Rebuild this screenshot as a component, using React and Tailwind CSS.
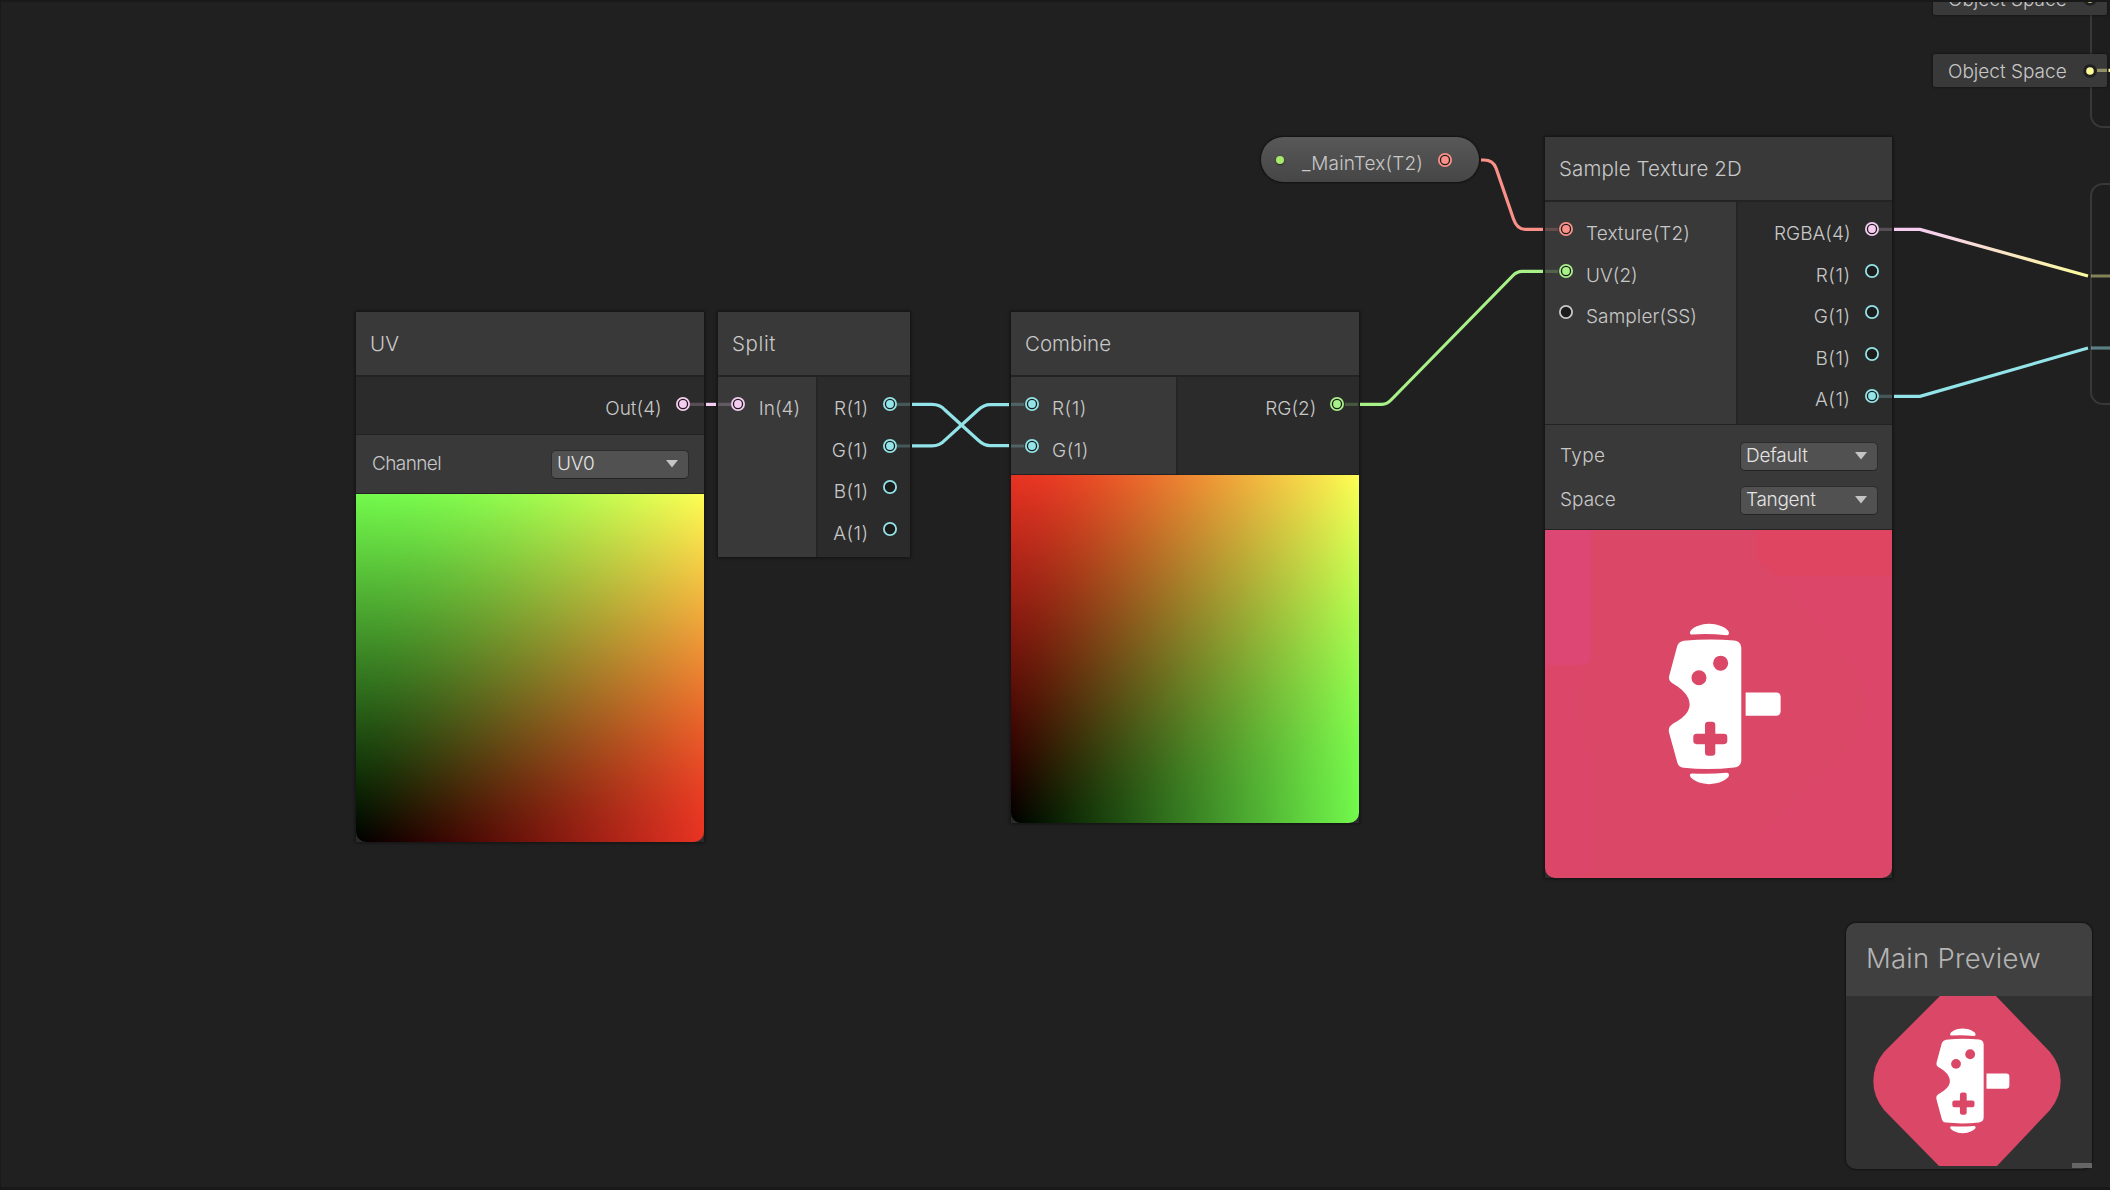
import React from "react";

const COLORS = {
  pink: "#f6cdf1",
  cyan: "#93e4e8",
  green: "#a8f088",
  red: "#fb9089",
  gray: "#c8c8c8",
  yellow: "#fcfc9c",
};

function Port({ color, connected = false, className = "" }) {
  return (
    <svg viewBox="0 0 16 16" className={`size-4 shrink-0 ${className}`}>
      <circle cx="8" cy="8" r="6.1" fill="#1c1c1c" stroke={COLORS[color]} strokeWidth="1.8" />
      {connected && <circle cx="8" cy="8" r="3.9" fill={COLORS[color]} />}
    </svg>
  );
}

function InputPort({ label, color, connected, tracking = "" }) {
  return (
    <div className="flex h-[41.6px] items-center gap-[12.5px]">
      <Port color={color} connected={connected} />
      <span className={`relative top-[4.7px] leading-6 whitespace-nowrap ${tracking}`}>{label}</span>
    </div>
  );
}

function OutputPort({ label, color, connected, tracking = "" }) {
  return (
    <div className="flex h-[41.6px] items-center justify-end gap-[13px]">
      <span className={`relative top-[4.7px] leading-6 whitespace-nowrap ${tracking}`}>{label}</span>
      <Port color={color} connected={connected} />
    </div>
  );
}

function Node({ title, tracking = "", place, children }) {
  return (
    <section className={`absolute flex flex-col bg-[#2b2b2b] shadow-[0_0_3px_1px_rgba(0,0,0,0.45)] ${place}`}>
      <header className="flex h-[63px] shrink-0 items-center bg-[#393939] pl-[14px] text-[20.5px]">
        <span className={`leading-6 ${tracking}`}>{title}</span>
      </header>
      <div className="h-[2px] shrink-0 bg-[#232323]" />
      {children}
    </section>
  );
}

function Dropdown({ value, tracking }) {
  return (
    <div className="flex h-[29px] w-[138px] items-center justify-between rounded-[5px] border border-[#2c2c2c] border-b-[#232323] bg-[#515151] pr-[10px] pl-[5px] text-[#e4e4e4]">
      <span className={`leading-6 ${tracking}`}>{value}</span>
      <svg viewBox="0 0 12 8" className="h-2 w-3">
        <path d="M0 0H12L6 7.6Z" fill="#c4c4c4" />
      </svg>
    </div>
  );
}

function Field({ label, labelTracking = "", value, valueTracking = "" }) {
  return (
    <div className="flex items-center justify-between">
      <span className={`leading-6 ${labelTracking}`}>{label}</span>
      <Dropdown value={value} tracking={valueTracking} />
    </div>
  );
}

function DisplayColorFilter() {
  return (
    <svg className="absolute size-0">
      <filter id="display-gamut" x="0" y="0" width="1" height="1" colorInterpolationFilters="linearRGB">
        <feColorMatrix
          type="matrix"
          values="0.815 0.171 0 0 0  0.0331 0.956 0 0 0  0.0168 0.0723 0 0 0  0 0 0 1 0"
        />
      </filter>
    </svg>
  );
}

function GradientPreview({ layers, className }) {
  return (
    <div className={`overflow-hidden rounded-b-[10px] ${className}`}>
      <div className={`size-full bg-blend-screen [filter:url(#display-gamut)] ${layers}`} />
    </div>
  );
}

function Controller() {
  return (
    <g>
      <g fill="#fff">
        <path d="M149 97C152 86 178 72 206 72C236 72 262 86 266 97Q267 106 259 106Q206 101 155 104Q148 104 149 97Z" />
        <path d="M149 528C152 539 178 553 206 553C236 553 262 539 266 528Q267 519 259 519Q206 524 155 521Q148 521 149 528Z" />
        <path d="M130 123Q206 115 282 122Q302 125 303 144V482Q302 501 282 503Q206 512 130 504Q115 502 111 488L86 397C84 386 88 378 96 373C112 363 148 345 148 313C148 281 112 259 96 250C88 244 84 238 87 227L111 138Q115 126 130 123Z" />
        <path d="M316 278H409Q421 279 421 290V336Q421 347 409 348H316Z" />
      </g>
      <g fill="#db4767">
        <circle cx="241" cy="190" r="22.5" />
        <circle cx="176" cy="234" r="22.5" />
        <rect x="194" y="366" width="31" height="102" rx="10" />
        <rect x="159" y="402" width="102" height="31" rx="10" />
      </g>
    </g>
  );
}

function TexturePreview() {
  return (
    <svg viewBox="0 0 347 348" className="h-[348px] w-[347px] rounded-b-[10px]">
      <rect width="347" height="348" fill="#dc4668" />
      <rect width="46" height="135" fill="#dc4774" />
      <rect x="213" width="134" height="46" fill="#df4560" />
      <path
        d="M46 0H213V30L235 50L302 127Q340 174 302 222L215 305V348H46V222Q16 174 46 127Z"
        fill="#db4767"
      />
      <g stroke="#df4466" strokeOpacity="0.35" strokeWidth="2">
        <path d="M127 0V45M141 0V38M155 0V34M180 0V30M200 0V34" />
        <path d="M127 302V348M153 315V348M160 315V348M174 318V348M190 318V348M204 316V348M210 310V348" />
      </g>
      <g transform="translate(95.300 69.800) scale(0.33333)">
        <Controller />
      </g>
    </svg>
  );
}

function Wires() {
  return (
    <svg viewBox="0 0 2110 1190" className="pointer-events-none absolute inset-0 size-full" fill="none" strokeWidth="3.2">
      <defs>
        <linearGradient id="pink-yellow" gradientUnits="userSpaceOnUse" x1="1920" y1="0" x2="2088" y2="0">
          <stop offset="0" stopColor={COLORS.pink} />
          <stop offset="1" stopColor={COLORS.yellow} />
        </linearGradient>
      </defs>
      <g stroke={COLORS.pink}>
        <path d="M706 404.4H716" />
        <path d="M690 404.4H704M718 404.4H731" strokeOpacity="0.22" />
        <path d="M1879 229.4H1892" strokeOpacity="0.22" />
      </g>
      <g stroke={COLORS.cyan}>
        <path d="M912 404.4H932Q940 404.4 945 410L978 440Q984 445.6 990 445.6H1009" />
        <path d="M912 445.8H932Q940 445.8 945 440L978 410Q984 404.6 990 404.6H1009" />
        <path d="M1894 396.4H1920L2088 348" />
        <path d="M897 404.4H910M897 446H910M1011 404.4H1024M1011 446H1024M1879 396.4H1892" strokeOpacity="0.25" />
        <path d="M2091 348H2110" strokeOpacity="0.5" />
      </g>
      <g stroke={COLORS.green}>
        <path d="M1360 404.4H1382Q1387 404.4 1392 399L1513 275.5Q1517 271.4 1522 271.4H1543" />
        <path d="M1345 404.4H1358M1545 271.4H1558" strokeOpacity="0.22" />
      </g>
      <g stroke={COLORS.red}>
        <path d="M1481 160H1484Q1493 160 1496 168L1513.5 219Q1517 229.3 1525 229.3H1543" />
        <path d="M1545 229.4H1558" strokeOpacity="0.22" />
      </g>
      <path d="M1894 229.4H1920L2088 276" stroke="url(#pink-yellow)" />
      <path d="M2091 276H2110M2097 70.4H2107" stroke={COLORS.yellow} strokeOpacity="0.45" />
      <path d="M2108.500 70.4H2110" stroke={COLORS.yellow} />
    </svg>
  );
}

function ObjectSpace({ place }) {
  return (
    <div className={`absolute flex h-[33px] w-[174px] items-center justify-between rounded-[2px] bg-[#393939] pr-[10.500px] pl-[15px] shadow-[0_0_2px_1px_rgba(0,0,0,0.3)] ${place}`}>
      <span className="relative top-px leading-6">Object Space</span>
      <svg viewBox="0 0 14 14" className="size-3.5">
        <circle cx="7" cy="7" r="6.8" fill="#202020" />
        <circle cx="7" cy="7" r="3.8" fill={COLORS.yellow} />
      </svg>
    </div>
  );
}

function MainPreview() {
  return (
    <section className="absolute top-[923px] left-[1846px] flex h-[246px] w-[246px] flex-col rounded-[10px] bg-[#313131] shadow-[0_0_2px_1px_rgba(0,0,0,0.4)]">
      <header className="flex h-[73px] items-center rounded-t-[10px] bg-[#404040] pl-5 text-[27.5px] tracking-[0.25px] text-[#b4b4b4]">
        <span className="relative -top-px">Main Preview</span>
      </header>
      <svg viewBox="0 0 246 170" className="h-[170px] w-[246px]">
        <path
          d="M94 0H150L204 56Q214.700 69 214.700 85Q214.700 101 204 114L151 170H93L38 114Q27.300 101 27.300 85Q27.300 69 38 56Z"
          fill="#db4767"
        />
        <g transform="translate(71.700 16.900) scale(0.2177)">
          <Controller />
        </g>
      </svg>
      <div className="absolute right-0 bottom-px h-[5px] w-5 bg-[#666]" />
    </section>
  );
}

export default function App() {
  return (
    <main className="relative h-[1190px] w-[2110px] overflow-hidden bg-[#202020] font-['Inter',sans-serif] text-[19px] font-[330] text-[#c8c8c8]">
      <DisplayColorFilter />

      <div className="absolute -top-4 left-[2090px] h-36 w-40 rounded-[13px] border-2 border-[#383838] bg-[#1e1e1e]" />
      <div className="absolute top-[183px] left-[2090px] h-[222px] w-40 rounded-[13px] border-2 border-[#383838] bg-[#1e1e1e]" />
      <ObjectSpace place="top-[-18px] left-[1933px]" />
      <ObjectSpace place="top-[54px] left-[1933px]" />

      <Node title="UV" tracking="tracking-[0.2px]" place="top-[312px] left-[356px] w-[348px]">
        <div className="h-[57px] pt-[6.500px] pr-[13.300px]">
          <OutputPort label="Out(4)" color="pink" connected />
        </div>
        <div className="flex h-[59px] flex-col justify-center border-t border-[#232323] bg-[#393939] pr-[15px] pl-4">
          <Field label="Channel" labelTracking="tracking-[-0.6px]" value="UV0" valueTracking="tracking-[-0.3px]" />
        </div>
        <div className="h-px bg-[#232323]" />
        <GradientPreview
          className="h-[348px]"
          layers="bg-[linear-gradient(to_right,#000,#f00),linear-gradient(to_top,#000,#0f0)]"
        />
      </Node>

      <Node title="Split" tracking="tracking-[0.6px]" place="top-[312px] left-[718px] w-[192px]">
        <div className="flex h-[180px]">
          <div className="w-[98px] bg-[#393939] pt-[6.500px] pl-[12.300px]">
            <InputPort label="In(4)" color="pink" connected />
          </div>
          <div className="flex-1 border-l-2 border-[#252525] pt-[6.500px] pr-[12.300px]">
            <OutputPort label="R(1)" color="cyan" connected tracking="tracking-[0.5px]" />
            <OutputPort label="G(1)" color="cyan" connected tracking="tracking-[0.5px]" />
            <OutputPort label="B(1)" color="cyan" tracking="tracking-[0.5px]" />
            <OutputPort label="A(1)" color="cyan" tracking="tracking-[0.5px]" />
          </div>
        </div>
      </Node>

      <Node title="Combine" place="top-[312px] left-[1011px] w-[348px]">
        <div className="flex h-[97px]">
          <div className="w-[165px] bg-[#393939] pt-[6.500px] pl-[12.500px]">
            <InputPort label="R(1)" color="cyan" connected tracking="tracking-[0.5px]" />
            <InputPort label="G(1)" color="cyan" connected tracking="tracking-[0.5px]" />
          </div>
          <div className="flex-1 border-l-2 border-[#252525] pt-[6.500px] pr-[13.700px]">
            <OutputPort label="RG(2)" color="green" connected />
          </div>
        </div>
        <div className="h-px bg-[#232323]" />
        <GradientPreview
          className="h-[348px]"
          layers="bg-[linear-gradient(to_top,#000,#f00),linear-gradient(to_right,#000,#0f0)]"
        />
      </Node>

      <Node title="Sample Texture 2D" tracking="tracking-[0.1px]" place="top-[137px] left-[1545px] w-[347px]">
        <div className="flex h-[222px]">
          <div className="w-[191px] bg-[#393939] pt-[6.500px] pl-[12.500px]">
            <InputPort label="Texture(T2)" color="red" connected tracking="tracking-[0.1px]" />
            <InputPort label="UV(2)" color="green" connected />
            <InputPort label="Sampler(SS)" color="gray" tracking="tracking-[0.1px]" />
          </div>
          <div className="flex-1 border-l-2 border-[#252525] pt-[6.500px] pr-[12.500px]">
            <OutputPort label="RGBA(4)" color="pink" connected />
            <OutputPort label="R(1)" color="cyan" tracking="tracking-[0.5px]" />
            <OutputPort label="G(1)" color="cyan" tracking="tracking-[0.5px]" />
            <OutputPort label="B(1)" color="cyan" tracking="tracking-[0.5px]" />
            <OutputPort label="A(1)" color="cyan" connected tracking="tracking-[0.5px]" />
          </div>
        </div>
        <div className="flex h-[105px] flex-col gap-[15px] border-t border-[#232323] bg-[#393939] pt-[16.500px] pr-[14px] pl-[15px]">
          <Field label="Type" labelTracking="tracking-[0.4px]" value="Default" valueTracking="tracking-[-0.2px]" />
          <Field label="Space" value="Tangent" valueTracking="tracking-[-0.3px]" />
        </div>
        <div className="h-px bg-[#232323]" />
        <TexturePreview />
      </Node>

      <div className="absolute top-[137px] left-[1261px] flex h-[45px] w-[218px] items-center rounded-full bg-linear-to-b from-[#585858] to-[#464646] pl-[15px] shadow-[0_0_2px_1px_rgba(0,0,0,0.5)]">
        <div className="size-2 rounded-full bg-[#a5e96d] shadow-[0_1px_2px_rgba(0,0,0,0.5)]" />
        <span className="relative top-[4px] ml-[18px] w-[128px] leading-6 tracking-[0.15px]">_MainTex(T2)</span>
        <Port color="red" connected className="ml-[6.500px]" />
      </div>

      <Wires />
      <MainPreview />

      <div className="pointer-events-none absolute inset-0 border-t-2 border-b-[3px] border-l border-[#191919]" />
    </main>
  );
}
